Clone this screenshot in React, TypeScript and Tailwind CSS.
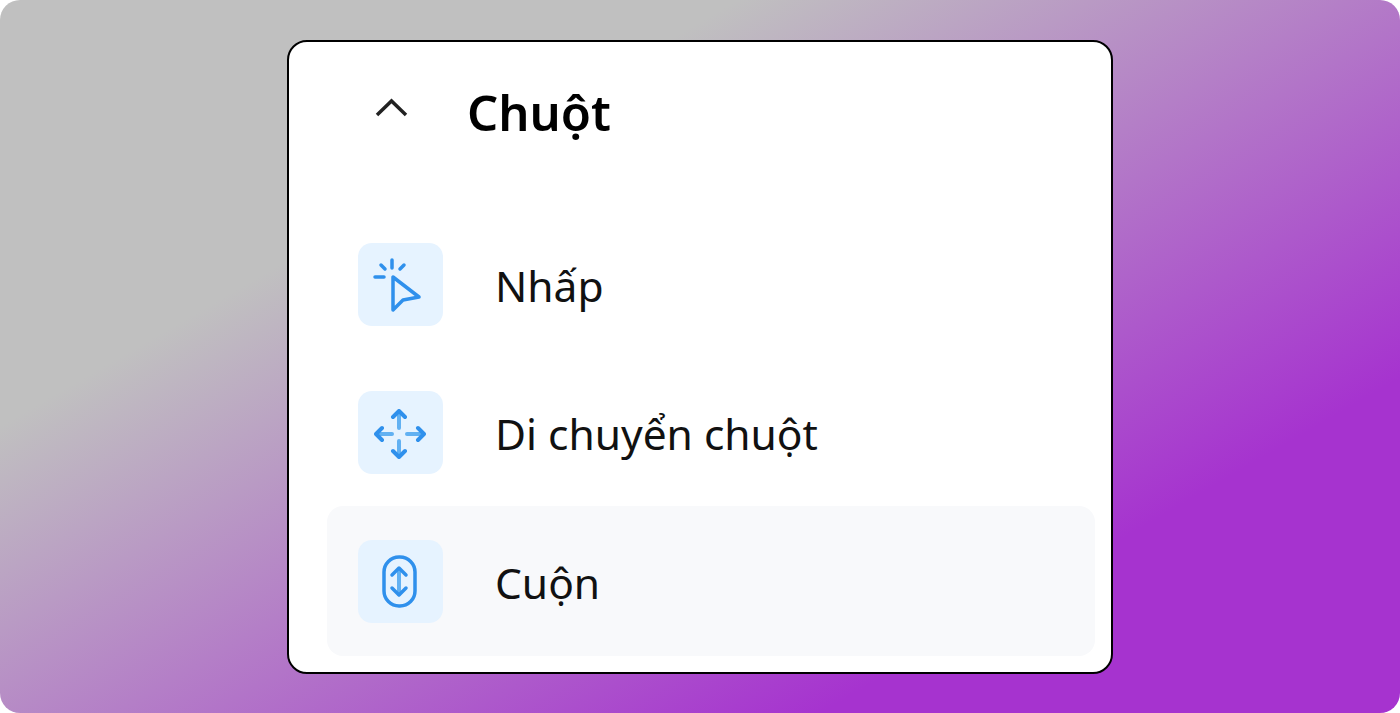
export default function App() {
  return (
    <div className="h-[713px] w-[1400px] overflow-hidden bg-white font-['Noto_Sans',sans-serif]">
      <div className="flex h-full justify-center rounded-[20px] bg-[linear-gradient(150deg,#c0c0c0_28%,#a633cf_78%)] pt-10">
        <div className="h-[634px] w-[826px] rounded-[20px] border-2 border-black bg-white">
          <div className="flex h-[140px] items-center pl-[86px]">
            <svg className="h-9 w-9" viewBox="0 0 36 36" fill="none" stroke="#222" strokeWidth="3.500">
              <path d="M2 21 16.500 7 31 21" />
            </svg>
            <span className="ml-[56px] text-[49px] font-semibold leading-none text-black">Chuột</span>
          </div>
          <div className="mt-7 flex flex-col">
            <Row label="Nhấp" icon={<ClickIcon />} />
            <Row label="Di chuyển chuột" icon={<MoveIcon />} />
            <Row label="Cuộn" icon={<ScrollIcon />} active />
          </div>
        </div>
      </div>
    </div>
  );
}

function Row({ label, icon, active }: { label: string; icon: React.ReactNode; active?: boolean }) {
  return (
    <div
      className={
        active
          ? "ml-[38px] flex h-[150px] w-[768px] items-center rounded-2xl bg-[#f8f9fb] pl-[31px]"
          : "ml-[38px] flex h-[148px] w-[768px] items-center pl-[31px]"
      }
    >
      <div className="h-[83px] w-[85px] rounded-[14px] bg-[#e6f3ff]">{icon}</div>
      <span className="ml-[52px] pt-1 text-[42.500px] leading-none text-[#111]">{label}</span>
    </div>
  );
}

function ClickIcon() {
  return (
    <svg className="h-full w-full blur-[0.6px]" viewBox="0 0 85 83" fill="none" stroke="#2f90ec" strokeWidth="3.500" strokeLinecap="round" strokeLinejoin="round">
      <path d="M34 17v8M23 22l4 4M46 22l-4 4M17 34h9" />
      <path d="M35 34v33l10-10 16-3z" />
    </svg>
  );
}

function MoveIcon() {
  return (
    <svg className="h-full w-full blur-[0.6px]" viewBox="0 0 85 83" fill="none" strokeLinecap="round" strokeLinejoin="round">
      <g stroke="#62b1f2" strokeWidth="4">
        <path d="M41 24v13M41 50v12M22 43h12M49 43h13" />
      </g>
      <g stroke="#2f90ec" strokeWidth="4">
        <path d="m35 26 6-6 6 6M35 60l6 6 6-6M24 37l-6 6 6 6M60 37l6 6-6 6" />
      </g>
    </svg>
  );
}

function ScrollIcon() {
  return (
    <svg className="h-full w-full blur-[0.6px]" viewBox="0 0 85 83" fill="none" stroke="#2f90ec" strokeWidth="3.500" strokeLinecap="round" strokeLinejoin="round">
      <rect x="26" y="17" width="31" height="49" rx="15" />
      <path stroke="#62b1f2" strokeWidth="4" d="M41 30v24" />
      <path d="m34 35 7-7 7 7M34 48l7 7 7-7" />
    </svg>
  );
}
